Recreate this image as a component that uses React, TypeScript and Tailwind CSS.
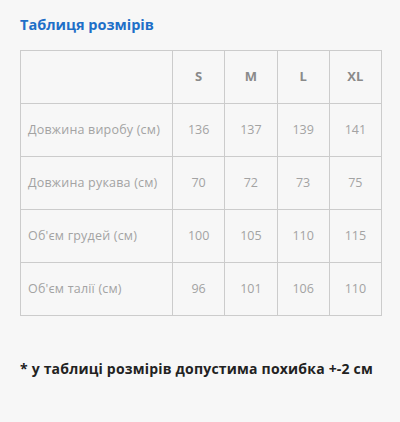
import React from 'react';

const sizes = ['S', 'M', 'L', 'XL'];

const rows = [
  { label: 'Довжина виробу (см)', values: [136, 137, 139, 141] },
  { label: 'Довжина рукава (см)', values: [70, 72, 73, 75] },
  { label: "Об'єм грудей (см)", values: [100, 105, 110, 115] },
  { label: "Об'єм талії (см)", values: [96, 101, 106, 110] },
];

export default function App() {
  return (
    <div className="min-h-[422px] w-[400px] bg-[#f7f7f7] px-5 pt-[15px] font-['Open_Sans',sans-serif]">
      <h2 className="text-[14.5px] font-bold leading-5 text-[#1e6fc8]">Таблиця розмірів</h2>

      <table className="mt-[15px] w-[362px] table-fixed border-collapse border border-[#cccccc]">
        <colgroup>
          <col className="w-[152px]" />
          <col />
          <col />
          <col />
          <col />
        </colgroup>
        <thead>
          <tr className="h-[53px]">
            <th className="border border-[#cccccc]" />
            {sizes.map(s => (
              <th key={s} className="border border-[#cccccc] text-center text-[13px] font-bold text-[#8a8a8a]">
                {s}
              </th>
            ))}
          </tr>
        </thead>
        <tbody>
          {rows.map(row => (
            <tr key={row.label} className="h-[53px]">
              <td className="border border-[#cccccc] pl-[7px] text-[12.5px] tracking-[0.2px] text-[#a3a3a3]">{row.label}</td>
              {row.values.map((v, i) => (
                <td key={i} className="border border-[#cccccc] text-center text-[12.5px] text-[#a3a3a3]">
                  {v}
                </td>
              ))}
            </tr>
          ))}
        </tbody>
      </table>

      <p className="mt-[42px] text-[14px] font-bold tracking-[0.2px] text-[#222222]">
        * у таблиці розмірів допустима похибка +-2 см
      </p>
    </div>
  );
}
